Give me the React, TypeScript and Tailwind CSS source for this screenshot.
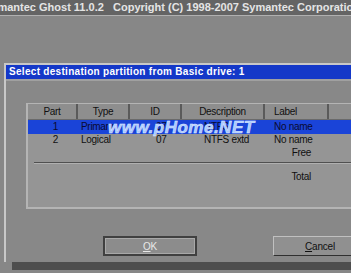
import React from "react";

export default function App() {
  const cell = "h-full flex items-center justify-center border-r-2 border-[#5a5a5a]";
  return (
    <div className="w-[351px] h-[273px] bg-[#878787] overflow-hidden relative" style={{ fontFamily: '"Liberation Sans", Arial, sans-serif' }}>
      {/* top bar */}
      <div className="h-[16px] bg-[#646464] border-b border-[#b0b0b0] text-[#e4e4e4] font-bold text-[11px] leading-[15px] whitespace-nowrap overflow-hidden">
        <span className="ml-[-16px]">Symantec Ghost 11.0.2&nbsp;&nbsp;&nbsp;Copyright (C) 1998-2007 Symantec Corporation</span>
      </div>
      {/* dialog */}
      <div className="mt-[47px] ml-[4px] w-[400px] flex flex-col">
        <div className="border-l-2 border-t-2 border-[#c8c8c8] bg-[#888888] h-[199px] flex flex-col">
          <div className="h-[14px] bg-[#1438c8] text-white font-bold text-[10px] leading-[14px] pl-[3px] tracking-[0.3px] whitespace-nowrap">
            Select destination partition from Basic drive: 1
          </div>
          <div className="h-[2px] bg-[#a0a0a0]" />
          {/* panel */}
          <div className="ml-[20px] mt-[22px] h-[106px] border-l-2 border-t border-b-2 border-[#b4b4b4] bg-[#959595] flex flex-col text-[10px] tracking-[-0.3px] text-[#101010] relative">
            <div className="h-[16px] flex bg-[#8e8e8e] border-b border-[#6a6a6a] leading-[15px]">
              <div className={cell + " w-[50px]"}>Part</div>
              <div className={cell + " w-[52px]"}>Type</div>
              <div className={cell + " w-[52px]"}>ID</div>
              <div className={cell + " w-[83px]"}>Description</div>
              <div className={cell + " w-[64px] !justify-start pl-[9px]"}>Label</div>
              <div className="w-[60px]" />
            </div>
            <div className="h-[14px] flex bg-[#1a44d8] text-[#0a0a30] leading-[14px]">
              <div className="w-[50px] text-right pr-[20px]">1</div>
              <div className="w-[52px] pl-[3px]">Primary</div>
              <div className="w-[52px] pl-[26px]">07</div>
              <div className="w-[83px] pl-[22px]">NTFS</div>
              <div className="w-[64px] pl-[9px]">No name</div>
            </div>
            <div className="h-[12px] flex leading-[12px]">
              <div className="w-[50px] text-right pr-[20px]">2</div>
              <div className="w-[52px] pl-[3px]">Logical</div>
              <div className="w-[52px] pl-[26px]">07</div>
              <div className="w-[83px] pl-[22px]">NTFS extd</div>
              <div className="w-[64px] pl-[9px]">No name</div>
            </div>
            <div className="h-[13px] flex leading-[13px]">
              <div className="w-[283px] text-right">Free</div>
            </div>
            <div className="ml-[6px] h-[2px] border-t border-[#505050] border-b border-b-[#b0b0b0] mt-[3px]" />
            <div className="h-[18px] flex leading-[18px] mt-[4px]">
              <div className="w-[283px] text-right">Total</div>
            </div>
            {/* watermark */}
            <div className="absolute left-[80px] top-[11px] text-[17px] font-bold italic text-[#a8c8ff] tracking-[0.5px] whitespace-nowrap" style={{ WebkitTextStroke: "0.5px #e0ecff" }}>
              www.pHome.NET
            </div>
          </div>
          {/* buttons */}
          <div className="flex mt-[27px] text-[10px] tracking-[-0.2px]">
            <div className="ml-[97px] w-[94px] h-[20px] border-2 border-[#404040] bg-[#8c8c8c] flex items-center justify-center text-[#e8e8e8] outline outline-1 outline-[#a8a8a8] outline-offset-[-3px]">
              <span><span className="underline">O</span>K</span>
            </div>
            <div className="ml-[76px] w-[94px] h-[20px] border border-[#303030] border-t-[#c0c0c0] border-l-[#c0c0c0] bg-[#909090] flex items-center justify-center text-[#101010]">
              <span><span className="underline">C</span>ancel</span>
            </div>
          </div>
        </div>
        <div className="ml-[8px] h-[8px] bg-[#4e4e4e]" />
      </div>
    </div>
  );
}
